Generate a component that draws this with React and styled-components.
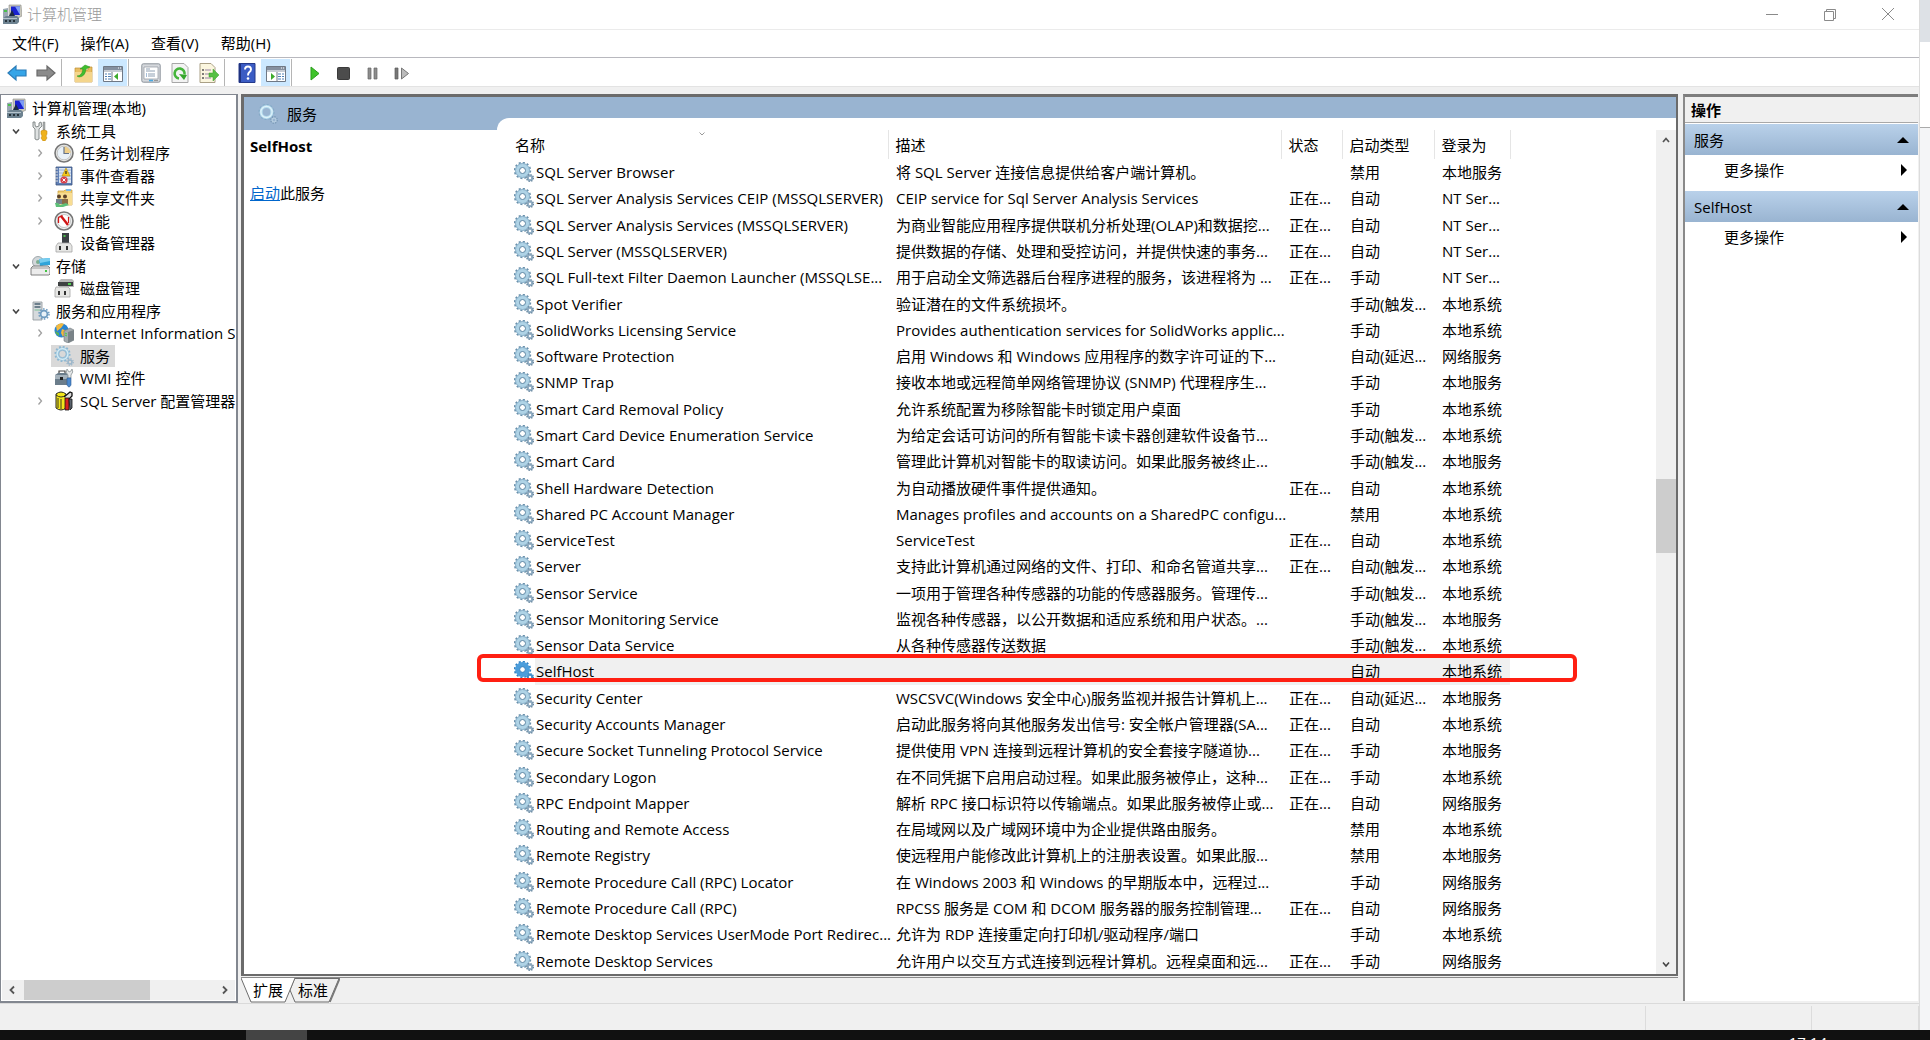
import React from 'react';
import styled, { createGlobalStyle, css } from 'styled-components';

const services = [
  ['SQL Server Browser', '将 SQL Server 连接信息提供给客户端计算机。', '', '禁用', '本地服务'],
  ['SQL Server Analysis Services CEIP (MSSQLSERVER)', 'CEIP service for Sql Server Analysis Services', '正在...', '自动', 'NT Ser...'],
  ['SQL Server Analysis Services (MSSQLSERVER)', '为商业智能应用程序提供联机分析处理(OLAP)和数据挖...', '正在...', '自动', 'NT Ser...'],
  ['SQL Server (MSSQLSERVER)', '提供数据的存储、处理和受控访问，并提供快速的事务...', '正在...', '自动', 'NT Ser...'],
  ['SQL Full-text Filter Daemon Launcher (MSSQLSE...', '用于启动全文筛选器后台程序进程的服务，该进程将为 ...', '正在...', '手动', 'NT Ser...'],
  ['Spot Verifier', '验证潜在的文件系统损坏。', '', '手动(触发...', '本地系统'],
  ['SolidWorks Licensing Service', 'Provides authentication services for SolidWorks applic...', '', '手动', '本地系统'],
  ['Software Protection', '启用 Windows 和 Windows 应用程序的数字许可证的下...', '', '自动(延迟...', '网络服务'],
  ['SNMP Trap', '接收本地或远程简单网络管理协议 (SNMP) 代理程序生...', '', '手动', '本地服务'],
  ['Smart Card Removal Policy', '允许系统配置为移除智能卡时锁定用户桌面', '', '手动', '本地系统'],
  ['Smart Card Device Enumeration Service', '为给定会话可访问的所有智能卡读卡器创建软件设备节...', '', '手动(触发...', '本地系统'],
  ['Smart Card', '管理此计算机对智能卡的取读访问。如果此服务被终止...', '', '手动(触发...', '本地服务'],
  ['Shell Hardware Detection', '为自动播放硬件事件提供通知。', '正在...', '自动', '本地系统'],
  ['Shared PC Account Manager', 'Manages profiles and accounts on a SharedPC configu...', '', '禁用', '本地系统'],
  ['ServiceTest', 'ServiceTest', '正在...', '自动', '本地系统'],
  ['Server', '支持此计算机通过网络的文件、打印、和命名管道共享...', '正在...', '自动(触发...', '本地系统'],
  ['Sensor Service', '一项用于管理各种传感器的功能的传感器服务。管理传...', '', '手动(触发...', '本地系统'],
  ['Sensor Monitoring Service', '监视各种传感器，以公开数据和适应系统和用户状态。...', '', '手动(触发...', '本地服务'],
  ['Sensor Data Service', '从各种传感器传送数据', '', '手动(触发...', '本地系统'],
  ['SelfHost', '', '', '自动', '本地系统'],
  ['Security Center', 'WSCSVC(Windows 安全中心)服务监视并报告计算机上...', '正在...', '自动(延迟...', '本地服务'],
  ['Security Accounts Manager', '启动此服务将向其他服务发出信号: 安全帐户管理器(SA...', '正在...', '自动', '本地系统'],
  ['Secure Socket Tunneling Protocol Service', '提供使用 VPN 连接到远程计算机的安全套接字隧道协...', '正在...', '手动', '本地服务'],
  ['Secondary Logon', '在不同凭据下启用启动过程。如果此服务被停止，这种...', '正在...', '手动', '本地系统'],
  ['RPC Endpoint Mapper', '解析 RPC 接口标识符以传输端点。如果此服务被停止或...', '正在...', '自动', '网络服务'],
  ['Routing and Remote Access', '在局域网以及广域网环境中为企业提供路由服务。', '', '禁用', '本地系统'],
  ['Remote Registry', '使远程用户能修改此计算机上的注册表设置。如果此服...', '', '禁用', '本地服务'],
  ['Remote Procedure Call (RPC) Locator', '在 Windows 2003 和 Windows 的早期版本中，远程过...', '', '手动', '网络服务'],
  ['Remote Procedure Call (RPC)', 'RPCSS 服务是 COM 和 DCOM 服务器的服务控制管理...', '正在...', '自动', '网络服务'],
  ['Remote Desktop Services UserMode Port Redirec...', '允许为 RDP 连接重定向打印机/驱动程序/端口', '', '手动', '本地系统'],
  ['Remote Desktop Services', '允许用户以交互方式连接到远程计算机。远程桌面和远...', '正在...', '手动', '网络服务'],
];

const tree = [
  { label: '计算机管理(本地)', level: 0, icon: 'computer' },
  { label: '系统工具', level: 1, icon: 'tools', open: true },
  { label: '任务计划程序', level: 2, icon: 'clock', open: false },
  { label: '事件查看器', level: 2, icon: 'events', open: false },
  { label: '共享文件夹', level: 2, icon: 'shared', open: false },
  { label: '性能', level: 2, icon: 'perf', open: false },
  { label: '设备管理器', level: 2, icon: 'device' },
  { label: '存储', level: 1, icon: 'storage', open: true },
  { label: '磁盘管理', level: 2, icon: 'disk' },
  { label: '服务和应用程序', level: 1, icon: 'apps', open: true },
  { label: 'Internet Information Se', level: 2, icon: 'iis', open: false },
  { label: '服务', level: 2, icon: 'gears', selected: true },
  { label: 'WMI 控件', level: 2, icon: 'wmi' },
  { label: 'SQL Server 配置管理器', level: 2, icon: 'sql', open: false },
];

const iconShapes = {
  computer: (
    <>
      <path d='M7 1h12l1 11-4 2-9-1z' fill='#c9c8bd' stroke='#8b8b86' strokeWidth='.6' />
      <path d='M9 2.5h9V11H9z' fill='#1a22cf' />
      <path d='M13 2.500h5V11z' fill='#7d9df5' />
      <path d='M1 5l5-1v9l-5 1z' fill='#9aa7b3' />
      <path d='M2 6h3v2H2z' fill='#4ac04a' />
      <path d='M7 12l3-6 3 6z' fill='#1d2b45' />
      <path d='M1 14l3-2h11l2 2v4l-2 2H1z' fill='#6d8290' />
      <path d='M1 14h14v1H1z' fill='#b6c4cd' />
      <path d='M3 16h2v2H3zM7 16h2v2H7zM11 16h2v2h-2z' fill='#27333b' />
    </>
  ),
  tools: (
    <>
      <path d='M3 1v5l2 2v10l2 1 2-1V8l3-3-1-4-2 1v3L6 6 5 4V1z' fill='#dfe2e2' stroke='#7c8181' strokeWidth='.9' />
      <path d='M13 1h2v8h-2z' fill='#a8adad' stroke='#777' strokeWidth='.4' />
      <path d='M11 10q3-2 6 0v3l-1 2 1 2-2 3h-2l-2-3 1-2-1-2z' fill='#efb21c' stroke='#bb8110' strokeWidth='.5' />
    </>
  ),
  clock: (
    <>
      <circle cx='10' cy='10' r='9' fill='#e8e8e6' stroke='#777' strokeWidth='1.600' />
      <circle cx='10' cy='10' r='6.800' fill='#e9f1f8' stroke='#aaa' strokeWidth='.6' />
      <path d='M10 10V3.500a6.500 6.500 0 0 1 6.500 6.500z' fill='#efcf8a' />
      <path d='M10 4v6.500h5' fill='none' stroke='#65738a' strokeWidth='1.200' />
    </>
  ),
  events: (
    <>
      <path d='M2 1h16v18H2z' fill='#5f7fb6' stroke='#3b547f' strokeWidth='.8' />
      <path d='M5 2h12v15H5z' fill='#dce6f2' />
      <path d='M5 4h12M5 7h12M5 10h12M5 13h12' stroke='#8da9d2' strokeWidth='.8' />
      <path d='M1 3h3M1 6h3M1 9h3M1 12h3M1 15h3' stroke='#ddd' strokeWidth='1.200' />
      <path d='M12 2l4 8H8z' fill='#f8cb1c' stroke='#b58a0c' strokeWidth='.6' />
      <path d='M12 5v3' stroke='#222' strokeWidth='1.200' />
      <circle cx='10' cy='14' r='3.600' fill='#d8404a' />
      <path d='M8.500 12.500l3 3M11.500 12.500l-3 3' stroke='#fff' strokeWidth='1' />
    </>
  ),
  shared: (
    <>
      <path d='M4 3h6l1-1h7v15H4z' fill='#f1cf72' stroke='#c4983a' strokeWidth='.7' />
      <path d='M12 1h5v2h-5z' fill='#7ab7e8' />
      <path d='M4 5h14v12H4z' fill='#f8dd92' />
      <circle cx='5' cy='8.500' r='2' fill='#5a4028' />
      <circle cx='11' cy='8.500' r='2' fill='#5a4028' />
      <path d='M2 11h6v5H2z' fill='#75818c' />
      <path d='M8 11h6v5H8z' fill='#8a6c46' />
      <path d='M1 15q3-1 5 2l6-2 3 2-6 2H2z' fill='#5dbf78' />
    </>
  ),
  perf: (
    <>
      <circle cx='10' cy='10' r='9' fill='#eceeee' stroke='#777' strokeWidth='1.600' />
      <circle cx='10' cy='10' r='6.500' fill='#fff' stroke='#b9b9b9' strokeWidth='.8' />
      <path d='M4.500 12V6.500l4-2' fill='none' stroke='#d11616' strokeWidth='1.300' />
      <path d='M7 5l7 9' stroke='#d11616' strokeWidth='2.400' />
      <path d='M14.500 6v6' stroke='#d11616' strokeWidth='1.200' />
    </>
  ),
  device: (
    <>
      <path d='M8 0h7v10H8z' fill='#3c4044' />
      <path d='M9.500 2h2v2h-2z' fill='#4ac04a' />
      <path d='M4 10h12l2 3v6H2v-6z' fill='#e6e6e4' stroke='#a4a4a4' strokeWidth='.8' />
      <path d='M5 13h2v4H5zM12 13h2v4h-2z' fill='#333' />
    </>
  ),
  storage: (
    <>
      <circle cx='8' cy='6' r='5.500' fill='#d2d7da' stroke='#8d979c' strokeWidth='.8' />
      <circle cx='8' cy='6' r='2' fill='#7cae90' />
      <path d='M9 3l11-1v7l-10 1z' fill='#2fa4da' />
      <path d='M9 3l11-1v3l-10 2z' fill='#77cdf0' />
      <path d='M1 12l2-2h15l2 2v6l-1 1H1z' fill='#ececec' stroke='#747474' strokeWidth='.9' />
      <path d='M1 12h18' stroke='#8c8c8c' strokeWidth='.8' />
      <path d='M15 14h2v2h-2z' fill='#44c344' />
    </>
  ),
  disk: (
    <>
      <path d='M5 3l2-2h11l2 2v6H5z' fill='#b8b8b8' />
      <path d='M4 4h15v4H4z' fill='#3e4142' />
      <path d='M14 5h3v2h-3z' fill='#4fcf4f' />
      <path d='M2 9h12l2 2v8H1v-7z' fill='#e6e6e4' stroke='#a4a4a4' strokeWidth='.8' />
      <path d='M4 13h2v4H4zM10 13h2v4h-2z' fill='#333' />
    </>
  ),
  apps: (
    <>
      <path d='M3 1h9v18H3z' fill='#d6dadd' stroke='#8e969b' strokeWidth='.8' />
      <path d='M4.500 3h6M4.500 6h6' stroke='#4a6272' strokeWidth='1.400' />
      <path d='M4.500 9h6' stroke='#7bbf95' strokeWidth='1' />
      <circle cx='14' cy='13' r='3.400' fill='#e9f2f8' stroke='#6f9cc0' strokeWidth='1.800' />
      <circle cx='14' cy='13' r='5' fill='none' stroke='#6f9cc0' strokeWidth='1.500' strokeDasharray='1.600 1.540' />
    </>
  ),
  iis: (
    <>
      <circle cx='7.500' cy='7.500' r='7' fill='#2a84d0' />
      <path d='M2 3q4-4 8-2L7 5 3 8zM8 6l5 2-4 6-2-4z' fill='#f3b93e' />
      <path d='M1 8l4 2v3q-3-1-4-5z' fill='#58b058' />
      <path d='M10 8l6-3 4 2v10l-6 3-4-2z' fill='#a4abaf' stroke='#6f777b' strokeWidth='.6' />
      <path d='M14 9l6-2v10l-6 3z' fill='#7a8388' />
      <path d='M11 10l2 1M11 12l2 1' stroke='#43d043' strokeWidth='1' />
    </>
  ),
  wmi: (
    <>
      <path d='M1 7l3-2h9l3 2v10H1z' fill='#6b7d8b' />
      <path d='M1 7h15v4H1z' fill='#a5b2bc' />
      <path d='M5 5V3h6v2' fill='none' stroke='#444' strokeWidth='1.200' />
      <path d='M6 9h3v3H6z' fill='#222' />
      <path d='M13 1l2 3 2-1 1-2q2 3-1 6v3h-3V7q-3-2-1-6z' fill='#e4e7e8' stroke='#7c8588' strokeWidth='.7' />
      <path d='M13 10h4v7q-2 4-4 0z' fill='#4a88cc' stroke='#2b5a93' strokeWidth='.6' />
    </>
  ),
  sql: (
    <>
      <path d='M2 3q5-4 10 0v14q-5 4-10 0z' fill='#f2e51c' stroke='#222' strokeWidth='1' />
      <path d='M2 4q5 4 10 0M4 7v10M7 8v10' fill='none' stroke='#222' strokeWidth='.9' />
      <path d='M10 6l6-5 2 1v3l-3 3' fill='#ddd' stroke='#111' strokeWidth='1.300' />
      <path d='M11 7h4v12h-4z' fill='#d42020' stroke='#111' strokeWidth='.8' />
      <path d='M15 8h3v9l-2 2z' fill='#5c6570' stroke='#111' strokeWidth='.8' />
    </>
  ),
  gears: (
    <>
      <circle cx='8.500' cy='8' r='5.200' fill='none' stroke='#a3cde2' strokeWidth='3.200' />
      <circle cx='8.500' cy='8' r='7.200' fill='none' stroke='#8db7d2' strokeWidth='1.800' strokeDasharray='1.900 1.870' />
      <circle cx='8.500' cy='8' r='5.400' fill='none' stroke='#d6ecf6' strokeWidth='1.200' />
      <circle cx='8.500' cy='8' r='3.700' fill='none' stroke='#84aecb' strokeWidth='.7' />
      <circle cx='16' cy='16' r='2' fill='none' stroke='#9bb6ca' strokeWidth='1.600' />
      <circle cx='16' cy='16' r='3.300' fill='none' stroke='#9bb6ca' strokeWidth='1.200' strokeDasharray='1.300 1.290' />
    </>
  ),
  gearsHeader: (
    <>
      <circle cx='8.500' cy='8' r='7.200' fill='none' stroke='#86abc8' strokeWidth='1.800' strokeDasharray='1.900 1.870' />
      <circle cx='8.500' cy='8' r='5.400' fill='none' stroke='#b4dcee' strokeWidth='3' />
      <circle cx='8.500' cy='8' r='5.600' fill='none' stroke='#dff2fa' strokeWidth='1.200' />
      <circle cx='16' cy='16' r='2' fill='none' stroke='#b5cde0' strokeWidth='1.400' />
      <circle cx='16' cy='16' r='3.300' fill='none' stroke='#7898b5' strokeWidth='1.200' strokeDasharray='1.300 1.290' />
    </>
  ),
  service: (
    <>
      <circle cx='8.500' cy='8.500' r='7.800' fill='none' stroke='#6a90ab' strokeWidth='1.800' strokeDasharray='2.100 1.984' />
      <circle cx='8.500' cy='8.500' r='5' fill='none' stroke='#afd3e6' strokeWidth='4.600' />
      <circle cx='8.500' cy='8.500' r='7' fill='none' stroke='#7ba3bf' strokeWidth='.8' />
      <circle cx='8.500' cy='8.500' r='3' fill='#fff' stroke='#5a84a2' strokeWidth='1' />
      <circle cx='16' cy='16' r='2.200' fill='#fff' stroke='#8eabc1' strokeWidth='2' />
      <circle cx='16' cy='16' r='3.400' fill='none' stroke='#6d8ba2' strokeWidth='1.300' strokeDasharray='1.360 1.310' />
    </>
  ),
  serviceActive: (
    <>
      <circle cx='8.500' cy='8.500' r='7.800' fill='none' stroke='#3182c4' strokeWidth='1.800' strokeDasharray='2.100 1.984' />
      <circle cx='8.500' cy='8.500' r='5' fill='none' stroke='#4b9ddb' strokeWidth='4.800' />
      <circle cx='8.500' cy='8.500' r='2.800' fill='#fff' stroke='#2d78b8' strokeWidth='.9' />
      <circle cx='16' cy='16' r='2.200' fill='#fff' stroke='#3f8ecb' strokeWidth='2' />
      <circle cx='16' cy='16' r='3.400' fill='none' stroke='#3f8ecb' strokeWidth='1.300' strokeDasharray='1.360 1.310' />
    </>
  ),
  back: <path d='M1 10l8-7v4h10v6H9v4z' fill='#35a5e8' stroke='#2b7cb8' strokeWidth='1.200' />,
  forward: <path d='M19 10l-8-7v4H1v6h10v4z' fill='#8b8b8b' stroke='#6a6a6a' strokeWidth='1.200' />,
  folderUp: (
    <>
      <path d='M1 5h6l2 2h5V4h4v15H1z' fill='#e9bd62' stroke='#bd8f35' strokeWidth='.7' />
      <path d='M1 9h17v10H1z' fill='#f4d58c' />
      <path d='M3 13q5 0 6-7H6l5-4 5 2-4 2q-1 8-7 8z' fill='#3fbf2e' stroke='#2a8f1e' strokeWidth='.5' />
    </>
  ),
  paneLeft: (
    <>
      <path d='M.5 3.500h19v15H.5z' fill='#fff' stroke='#6f7885' />
      <path d='M1 4h18v3H1z' fill='#8590a0' />
      <path d='M15 5h1M17 5h1' stroke='#fff' />
      <path d='M1 7h18v2H1z' fill='#c6ccd4' />
      <path d='M9 9v9' stroke='#6f7885' />
      <path d='M2 11h2M5 11h3M2 13.500h2M5 13.500h3M2 16h2M5 16h3' stroke='#4d7fb5' />
      <path d='M15 10v7l-4-3.500z' fill='#3dab2c' />
    </>
  ),
  paneRight: (
    <>
      <path d='M.5 3.500h19v15H.5z' fill='#fff' stroke='#6f7885' />
      <path d='M1 4h18v3H1z' fill='#8590a0' />
      <path d='M15 5h1M17 5h1' stroke='#fff' />
      <path d='M1 7h18v2H1z' fill='#c6ccd4' />
      <path d='M11 9v9' stroke='#6f7885' />
      <path d='M12 11h3M16 11h2M12 13.500h3M16 13.500h2M12 16h3M16 16h2' stroke='#4d7fb5' />
      <path d='M5 10v7l4-3.500z' fill='#3dab2c' />
    </>
  ),
  properties: (
    <>
      <rect x='.8' y='.8' width='18.400' height='18.400' rx='1.500' fill='#d5d8dc' stroke='#8c939b' />
      <path d='M3 4h14v12H3z' fill='#fff' stroke='#8c939b' strokeWidth='.7' />
      <path d='M5 6h4M5 8h9M7 11h7M7 13h7' stroke='#8fa0b3' />
      <path d='M5 11h1M5 13h1' stroke='#4d7fb5' />
      <path d='M8 17.500h4' stroke='#4aa8e0' strokeWidth='1.600' />
      <path d='M13 17.500h4' stroke='#999' />
    </>
  ),
  refresh: (
    <>
      <path d='M2 .5h12l4 4v15H2z' fill='#f3f3f3' stroke='#a7a7a7' />
      <path d='M9 15.500a5 5 0 1 1 5.500-4' fill='none' stroke='#45b53b' strokeWidth='2.600' />
      <path d='M9 11l8 1-3 5z' fill='#35a52c' />
    </>
  ),
  exportList: (
    <>
      <path d='M1 .5h11l4 4v15H1z' fill='#fbf6df' stroke='#aaa086' />
      <path d='M3 7h2M3 11h2M3 15h2' stroke='#555' strokeWidth='1.300' />
      <path d='M6 7h6M6 11h5M6 15h6' stroke='#9a86a5' strokeWidth='1.200' />
      <path d='M10 10h4V6l6 6-6 6v-4h-4z' fill='#55c043' stroke='#389c2b' strokeWidth='.5' />
    </>
  ),
  help: (
    <>
      <path d='M2 .5h16v19H2z' fill='#3b5cc4' stroke='#24398a' />
      <path d='M2 1h2v18H2z' fill='#1f3280' />
      <path d='M8 6.500q0-3 3-3t3 3q0 1.500-2 3-1 1-1 3' fill='none' stroke='#fff' strokeWidth='1.900' />
      <circle cx='11' cy='15.500' r='1.300' fill='#fff' />
    </>
  ),
  play: <path d='M7 4l8 6.500L7 17z' fill='#3fc32b' stroke='#2b9e1c' />,
  stop: <rect x='4.500' y='4.500' width='12' height='12' rx='1' fill='#4c4c4c' stroke='#3a3a3a' />,
  pause: <path d='M6 5h3v11H6zM12 5h3v11h-3z' fill='#8d8d8d' stroke='#666' strokeWidth='.7' />,
  restart: (
    <>
      <path d='M4 5h3v11H4z' fill='#777' stroke='#5c5c5c' strokeWidth='.7' />
      <path d='M10.500 5l7 5.500-7 5.500z' fill='#bbb' stroke='#777' />
    </>
  ),
  minimize: <path d='M4 10.500h12' stroke='#8a8a8a' />,
  restore: <path d='M4.500 7.500h9v9h-9zM6.500 7V5.500h9v9H14' fill='none' stroke='#8a8a8a' />,
  close: <path d='M4 4l12 12M16 4L4 16' stroke='#8a8a8a' />,
  chevronUp: <path d='M7 12l3-3.500 3 3.500' fill='none' stroke='#555' strokeWidth='1.700' />,
  chevronDown: <path d='M7 8.500l3 3.500 3-3.500' fill='none' stroke='#444' strokeWidth='1.600' />,
  chevronLeft: <path d='M12 6.500L8.500 10l3.500 3.500' fill='none' stroke='#555' strokeWidth='1.800' />,
  chevronRight: <path d='M8 6.500l3.500 3.500L8 13.500' fill='none' stroke='#555' strokeWidth='1.800' />,
  expand: <path d='M8.500 6.500l3 3.500-3 3.500' fill='none' stroke='#a0a0a0' strokeWidth='1.300' />,
  sort: <path d='M7.500 8.500L10 11l2.500-2.500' fill='none' stroke='#999' />,
  collapse: <path d='M4 13l6-6 6 6z' fill='#000' />,
  more: <path d='M8 4l6 6-6 6z' fill='#000' />,
};

const Icon = ({ name }) => (
  <Svg viewBox='0 0 20 20' aria-hidden='true'>
    {iconShapes[name]}
  </Svg>
);

const toolbarGroups = [
  [['back', '后退'], ['forward', '前进']],
  [['folderUp', '上移一级'], ['paneLeft', '显示/隐藏控制台树', true]],
  [['properties', '属性'], ['refresh', '刷新'], ['exportList', '导出列表']],
  [['help', '帮助'], ['paneRight', '显示/隐藏操作窗格', true]],
  [['play', '启动服务'], ['stop', '停止服务'], ['pause', '暂停服务'], ['restart', '重新启动服务']],
];

const App = () => {
  return (
    <Desktop>
      <GlobalStyle />
      <Screen>
        <Window>
          <TitleBar>
            <Icon name='computer' />
            <Title>计算机管理</Title>
            <CaptionButton aria-label='最小化'>
              <Icon name='minimize' />
            </CaptionButton>
            <CaptionButton aria-label='还原'>
              <Icon name='restore' />
            </CaptionButton>
            <CaptionButton aria-label='关闭'>
              <Icon name='close' />
            </CaptionButton>
          </TitleBar>
          <MenuBar>
            <MenuItem>文件(F)</MenuItem>
            <MenuItem>操作(A)</MenuItem>
            <MenuItem>查看(V)</MenuItem>
            <MenuItem>帮助(H)</MenuItem>
          </MenuBar>
          <Toolbar>
            {toolbarGroups.map((group, i) => (
              <ToolGroup key={i}>
                {group.map(([icon, label, active]) => (
                  <ToolButton key={icon} aria-label={label} $active={active}>
                    <Icon name={icon} />
                  </ToolButton>
                ))}
              </ToolGroup>
            ))}
          </Toolbar>
          <Body>
            <TreePane />
            <Center>
              <ResultPane />
              <ViewTabs />
            </Center>
            <ActionsPane />
          </Body>
          <StatusBar>
            <StatusCell $width='auto' />
            <StatusCell $width='166px' />
            <StatusCell $width='107px' />
          </StatusBar>
        </Window>
        <Behind>
          <BehindTop />
          <BehindMiddle />
        </Behind>
      </Screen>
      <Taskbar>
        <TaskbarItem />
        <Clock>17:14</Clock>
      </Taskbar>
    </Desktop>
  );
};

const TreePane = () => (
  <TreeFrame>
    <Tree>
      {tree.map(({ label, level, icon, open, selected }) => (
        <TreeRow key={label} $level={level}>
          {level > 0 && (
            <Expander>
              {open !== undefined && <Icon name={open ? 'chevronDown' : 'expand'} />}
            </Expander>
          )}
          <TreeLabel $selected={selected}>
            <Icon name={icon} />
            {label}
          </TreeLabel>
        </TreeRow>
      ))}
    </Tree>
    <HorizontalScroll>
      <ScrollButton aria-label='向左滚动'>
        <Icon name='chevronLeft' />
      </ScrollButton>
      <HorizontalTrack>
        <HorizontalThumb />
      </HorizontalTrack>
      <ScrollButton aria-label='向右滚动'>
        <Icon name='chevronRight' />
      </ScrollButton>
    </HorizontalScroll>
  </TreeFrame>
);

const ResultPane = () => (
  <ResultFrame>
    <Detail>
      <DetailHeader>
        <Icon name='gearsHeader' />
        服务
      </DetailHeader>
      <DetailBody>
        <h2>SelfHost</h2>
        <p>
          <a href='#start'>启动</a>此服务
        </p>
      </DetailBody>
    </Detail>
    <ListSide>
      <ListSheet>
        <TableWrap>
          <ServiceTable>
            <colgroup>
              <col width='391' />
              <col width='393' />
              <col width='61' />
              <col width='92' />
              <col width='76' />
              <col />
            </colgroup>
            <thead>
              <tr>
                <NameHead>
                  名称
                  <SortMark>
                    <Icon name='sort' />
                  </SortMark>
                </NameHead>
                <Head>描述</Head>
                <Head>状态</Head>
                <Head>启动类型</Head>
                <Head>登录为</Head>
                <th />
              </tr>
            </thead>
            <tbody>
              {services.map(([name, description, status, startup, logon]) => {
                const active = name === 'SelfHost';
                return (
                  <ServiceRow key={name} $active={active}>
                    <NameCell>
                      <NameWrap>
                        <Icon name={active ? 'serviceActive' : 'service'} />
                        {name}
                      </NameWrap>
                    </NameCell>
                    <Cell>{description}</Cell>
                    <Cell>{status}</Cell>
                    <Cell>{startup}</Cell>
                    <Cell>{logon}</Cell>
                    <td>{active && <Marker />}</td>
                  </ServiceRow>
                );
              })}
            </tbody>
          </ServiceTable>
        </TableWrap>
        <VerticalScroll>
          <ScrollButton aria-label='向上滚动'>
            <Icon name='chevronUp' />
          </ScrollButton>
          <VerticalTrack>
            <VerticalThumb />
          </VerticalTrack>
          <ScrollButton aria-label='向下滚动'>
            <Icon name='chevronDown' />
          </ScrollButton>
        </VerticalScroll>
      </ListSheet>
    </ListSide>
  </ResultFrame>
);

const ViewTabs = () => (
  <Tabs>
    <Tab $active>
      <svg viewBox='0 0 54 25' aria-hidden='true'>
        <path d='M0 0l10 24h34L54 0' fill='#fff' stroke='#6d6d6d' />
      </svg>
      <span>扩展</span>
    </Tab>
    <Tab>
      <svg viewBox='0 0 54 25' aria-hidden='true'>
        <path d='M8.500 0.500L4 12l5 12h34L53 .5z' fill='#f0f0f0' stroke='#6d6d6d' />
        <path d='M44 24L54 0' stroke='#777' strokeWidth='1.500' />
      </svg>
      <span>标准</span>
    </Tab>
  </Tabs>
);

const ActionsPane = () => (
  <ActionsFrame>
    <ActionsTitle>操作</ActionsTitle>
    {['服务', 'SelfHost'].map((name) => (
      <ActionGroup key={name}>
        <GroupHead>
          {name}
          <Icon name='collapse' />
        </GroupHead>
        <GroupItem>
          更多操作
          <Icon name='more' />
        </GroupItem>
      </ActionGroup>
    ))}
  </ActionsFrame>
);

const GlobalStyle = createGlobalStyle`
  * {
    box-sizing: border-box;
  }
  body {
    margin: 0;
    overflow: hidden;
    color: #000;
    font-family: 'Open Sans', 'Noto Sans CJK SC', sans-serif;
    font-size: 15px;
    line-height: 20px;
  }
  button {
    margin: 0;
    padding: 0;
    border: 0;
    background: none;
    color: inherit;
    font: inherit;
  }
`;

const Svg = styled.svg`
  display: block;
  flex: none;
  width: 20px;
  height: 20px;
`;

const Desktop = styled.div`
  display: flex;
  flex-direction: column;
  height: 100vh;
`;

const Screen = styled.div`
  flex: 1;
  display: flex;
  min-height: 0;
`;

const Window = styled.main`
  flex: 1;
  min-width: 0;
  display: flex;
  flex-direction: column;
  background: #f0f0f0;
  border-right: 1px solid #dcdcdc;
`;

const TitleBar = styled.header`
  display: flex;
  align-items: center;
  height: 30px;
  padding: 0 2px 2px;
  background: #fff;
  border-bottom: 1px solid #ebebeb;
`;

const Title = styled.h1`
  flex: 1;
  margin: 0 0 0 5px;
  color: #999;
  font-size: 15px;
  font-weight: 300;
`;

const CaptionButton = styled.button`
  display: flex;
  align-items: center;
  justify-content: center;
  width: 58px;
  height: 26px;
`;

const MenuBar = styled.nav`
  display: flex;
  gap: 22px;
  height: 28px;
  padding: 0 12px;
  background: #fff;
  border-bottom: 1px solid #b8b8be;
`;

const MenuItem = styled.button`
  height: 26px;
`;

const Toolbar = styled.div`
  display: flex;
  height: 29px;
  padding: 1px 2px 0;
  background: #fff;
  border-bottom: 1px solid #e3e3e3;
`;

const ToolGroup = styled.div`
  display: flex;
  & + & {
    margin-left: 1px;
    padding-left: 7px;
    border-left: 1px solid #b5b5b5;
  }
`;

const ToolButton = styled.button`
  display: flex;
  align-items: center;
  justify-content: center;
  width: 29px;
  background: ${({ $active }) => ($active ? '#cce8ff' : 'none')};
`;

const Body = styled.div`
  flex: 1;
  display: flex;
  min-height: 0;
  padding-top: 7px;
`;

const TreeFrame = styled.aside`
  flex: none;
  display: flex;
  flex-direction: column;
  justify-content: space-between;
  width: 238px;
  padding: 2px 1px 1px;
  background: #fff;
  border: 1px solid #828790;
  border-right-width: 2px;
  border-bottom-width: 2px;
`;

const Tree = styled.ul`
  display: grid;
  grid-auto-rows: 1fr;
  height: 315px;
  margin: 0;
  padding: 0;
  list-style: none;
  overflow: hidden;
`;

const TreeRow = styled.li`
  display: flex;
  align-items: stretch;
  min-height: 0;
  padding-left: ${({ $level }) => ($level === 0 ? 1 : $level * 24 - 20)}px;
  white-space: nowrap;
`;

const Expander = styled.span`
  flex: none;
  display: flex;
  align-items: center;
  width: 20px;
  margin-right: 1px;
`;

const TreeLabel = styled.button`
  display: flex;
  align-items: center;
  gap: 6px;
  padding: 0 5px 0 3px;
  white-space: nowrap;
  background: ${({ $selected }) => ($selected ? '#d9d9d9' : 'none')};
`;

const HorizontalScroll = styled.div`
  display: flex;
  height: 20px;
  background: #f0f0f0;
`;

const ScrollButton = styled.button`
  flex: none;
  width: 20px;
  height: 20px;
`;

const HorizontalTrack = styled.div`
  flex: 1;
  padding-left: 2px;
`;

const HorizontalThumb = styled.div`
  width: 66%;
  height: 100%;
  background: #cdcdcd;
`;

const Center = styled.section`
  flex: 1;
  min-width: 0;
  display: flex;
  flex-direction: column;
  margin: 0 5px 0 3px;
`;

const ResultFrame = styled.div`
  flex: 1;
  display: flex;
  min-height: 0;
  background: #fff;
  border: 2px solid #6b6b6b;
  border-top: 3px solid #6b6b6b;
  border-left-width: 3px;
`;

const Detail = styled.div`
  flex: none;
  width: 253px;
`;

const DetailHeader = styled.div`
  display: flex;
  align-items: center;
  gap: 9px;
  height: 33px;
  padding: 0 14px;
  background: #99b4d1;
`;

const DetailBody = styled.div`
  padding: 6px;
  h2 {
    margin: 0 0 27px;
    font-size: 15px;
    line-height: 20px;
  }
  p {
    margin: 0;
  }
  a {
    color: #0066cc;
  }
`;

const ListSide = styled.div`
  flex: 1;
  min-width: 0;
  display: flex;
  padding-top: 21px;
  background: linear-gradient(#99b4d1 0 33px, #fff 33px);
`;

const ListSheet = styled.div`
  flex: 1;
  min-width: 0;
  display: flex;
  padding-top: 12px;
  background: #fff;
  border-top-left-radius: 12px;
`;

const TableWrap = styled.div`
  flex: 1;
  min-width: 0;
`;

const ServiceTable = styled.table`
  width: 100%;
  height: 100%;
  table-layout: fixed;
  border-collapse: collapse;
  th,
  td {
    padding: 0;
    font-weight: 400;
    text-align: left;
    white-space: nowrap;
  }
`;

const Head = styled.th`
  height: 29px;
  && {
    padding-left: 7px;
  }
  border-left: 1px solid #e5e5e5;
  &:nth-last-child(2) {
    border-right: 1px solid #e5e5e5;
  }
`;

const NameHead = styled.th`
  position: relative;
  height: 29px;
  && {
    padding-left: 18px;
  }
`;

const SortMark = styled.span`
  position: absolute;
  top: -6px;
  left: 50%;
`;

const Cell = styled.td`
  && {
    padding-left: 8px;
  }
`;

const NameCell = styled.td`
  && {
    padding-left: 17px;
  }
`;

const NameWrap = styled.div`
  display: flex;
  align-items: center;
  gap: 2px;
`;

const ServiceRow = styled.tr`
  position: relative;
  ${({ $active }) =>
    $active &&
    css`
      ${Cell} {
        background: #f0f0f0;
      }
      ${NameCell} {
        background: linear-gradient(to right, #fff 38px, #f0f0f0 38px);
      }
    `}
`;

const Marker = styled.div`
  position: absolute;
  top: -4px;
  right: 79px;
  bottom: 3px;
  left: -20px;
  border: 4px solid #ff1f12;
  border-radius: 6px;
`;

const VerticalScroll = styled.div`
  flex: none;
  display: flex;
  flex-direction: column;
  width: 20px;
  background: #f0f0f0;
`;

const VerticalTrack = styled.div`
  flex: 1;
  display: grid;
  grid-template-rows: 45fr 74px 55fr;
`;

const VerticalThumb = styled.div`
  grid-row: 2;
  background: #cdcdcd;
`;

const Tabs = styled.div`
  display: flex;
  height: 26px;
  margin-top: 1px;
  border-top: 1px solid #8a8a8a;
`;

const Tab = styled.button`
  position: relative;
  width: 54px;
  height: 25px;
  padding-bottom: 2px;
  margin-right: -9px;
  z-index: ${({ $active }) => ($active ? 1 : 0)};
  svg {
    position: absolute;
    top: 0;
    left: 0;
    width: 54px;
    height: 25px;
  }
  span {
    position: relative;
  }
`;

const ActionsFrame = styled.aside`
  flex: none;
  width: 235px;
  margin: 0 1px 2px 0;
  background: #fff;
  border-top: 3px solid #7d7d7d;
  border-left: 2px solid #8a8a8a;
`;

const ActionsTitle = styled.h2`
  height: 26px;
  margin: 0 0 1px;
  padding: 3px 6px;
  font-size: 15px;
  background: #f0f0f0;
  border-bottom: 1px solid #a8a8a8;
`;

const ActionGroup = styled.section`
  height: 67px;
`;

const GroupHead = styled.button`
  display: flex;
  align-items: center;
  justify-content: space-between;
  width: 100%;
  height: 31px;
  padding: 0 5px 0 9px;
  background: linear-gradient(#b9d1ea, #99b4d1);
`;

const GroupItem = styled.button`
  display: flex;
  align-items: center;
  justify-content: space-between;
  width: 100%;
  height: 30px;
  padding: 0 5px 0 39px;
`;

const StatusBar = styled.footer`
  display: flex;
  height: 27px;
  padding-top: 2px;
  border-top: 1px solid #dadada;
`;

const StatusCell = styled.div`
  flex: ${({ $width }) => ($width === 'auto' ? '1' : `0 0 ${$width}`)};
  border-right: 1px solid #dcdcdc;
`;

const Behind = styled.div`
  flex: none;
  width: 10px;
  background: #f4f5f7;
`;

const BehindTop = styled.div`
  height: 42px;
  background: #dde1e6;
`;

const BehindMiddle = styled.div`
  height: 86px;
  background: #fff;
  border-bottom: 1px solid #aaa;
`;

const Taskbar = styled.div`
  flex: none;
  display: flex;
  justify-content: space-between;
  height: 10px;
  padding: 0 103px 0 246px;
  background: #111;
  overflow: hidden;
`;

const TaskbarItem = styled.div`
  width: 61px;
  height: 10px;
  background: #444;
`;

const Clock = styled.span`
  padding-top: 2px;
  color: #fff;
`;

export default App;
